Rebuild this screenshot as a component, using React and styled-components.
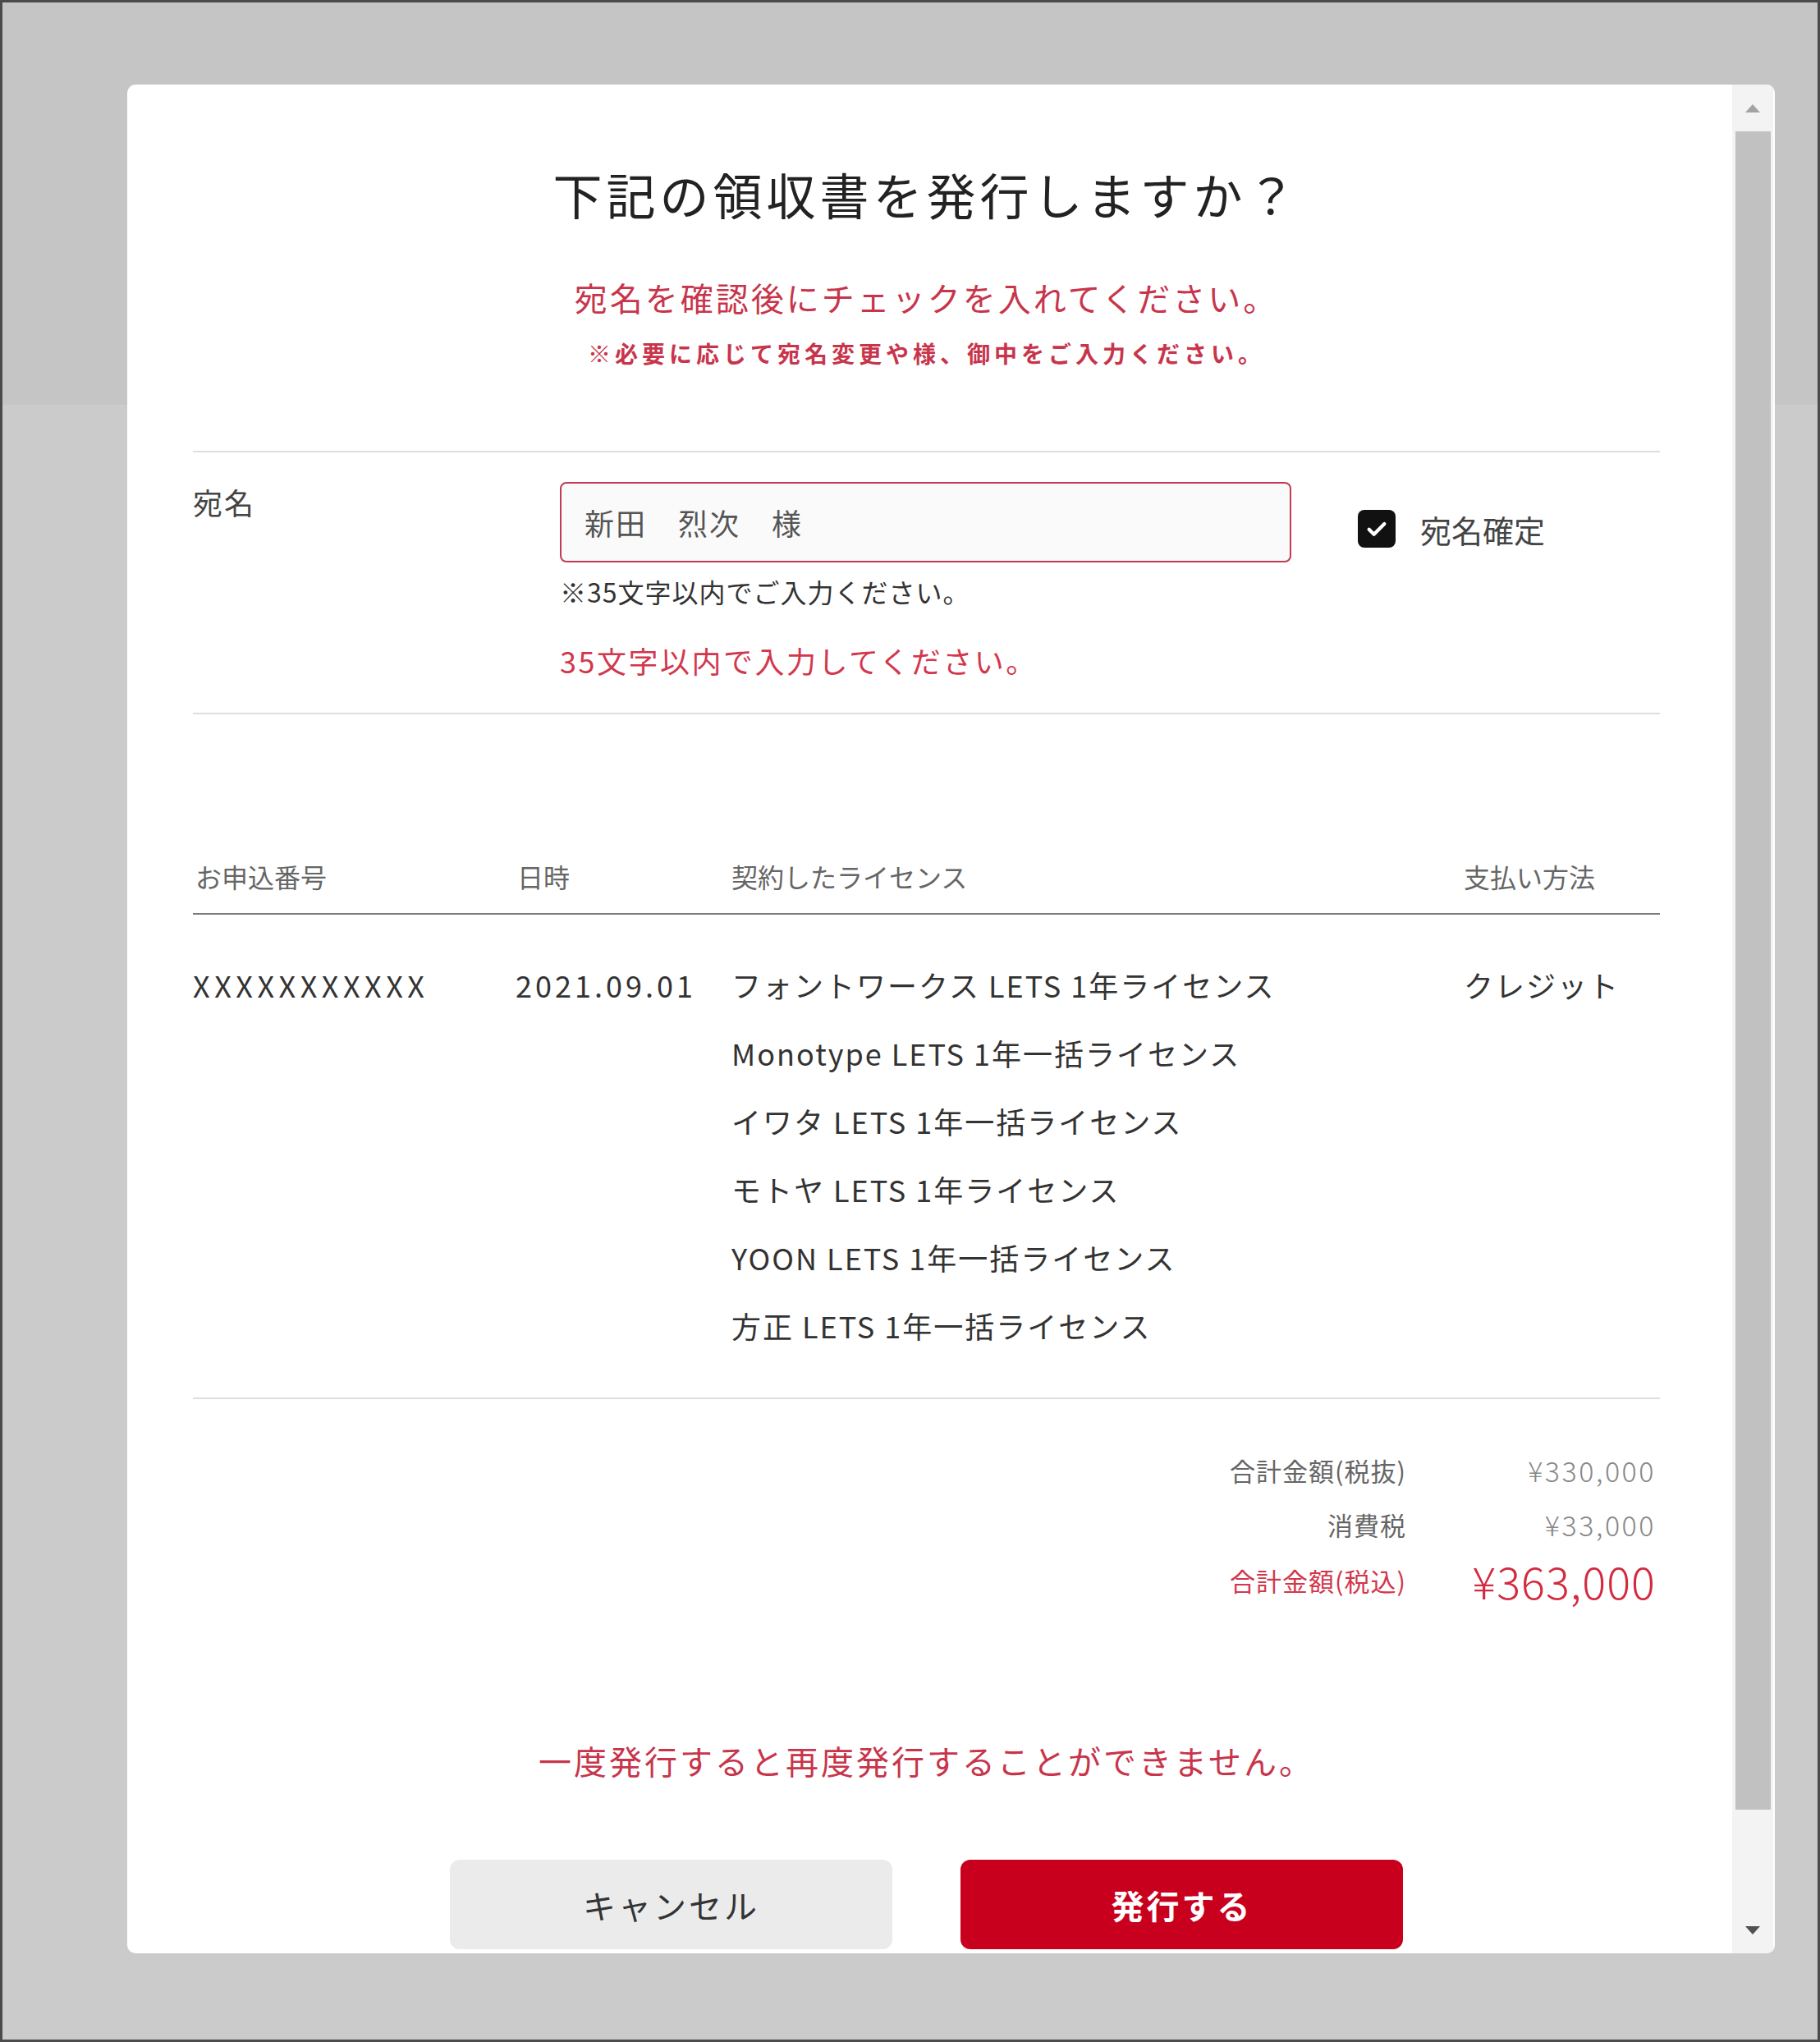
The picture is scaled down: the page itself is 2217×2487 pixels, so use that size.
import React from 'react';
import styled, { createGlobalStyle } from 'styled-components';

const GlobalStyle = createGlobalStyle`
  html, body {
    margin: 0;
    padding: 0;
  }
  body {
    font-family: "Noto Sans CJK JP", "Noto Sans", sans-serif;
    color: #333;
  }
`;

const Page = styled.div`
  box-sizing: border-box;
  width: 2217px;
  height: 2487px;
  border: 3px solid #4b4b4b;
  background: linear-gradient(to bottom, #c5c5c5 0, #c5c5c5 490px, #cbcbcb 490px);
  padding: 100px 52px 0 152px;
`;

const Modal = styled.div`
  height: 2276px;
  background: #fff;
  border-radius: 10px;
  display: flex;
  overflow: hidden;
`;

const Content = styled.div`
  flex: 1;
  overflow: hidden;
  padding: 0 88px 0 80px;
`;

const Title = styled.h1`
  margin: 98px 0 0;
  text-align: center;
  font-size: 60px;
  line-height: 70px;
  font-weight: 400;
  letter-spacing: 5px;
  color: #222;
`;

const Notice = styled.p`
  margin: ${(p) => p.$top}px 0 0;
  text-align: center;
  font-size: ${(p) => p.$size}px;
  line-height: ${(p) => p.$line}px;
  font-weight: ${(p) => (p.$bold ? 700 : 400)};
  letter-spacing: ${(p) => p.$spacing}px;
  color: #c8354b;
`;

const NameSection = styled.section`
  margin-top: 101px;
  border-top: 2px solid #dedede;
  border-bottom: 2px solid #dedede;
  padding: 36px 0 41px;
  display: grid;
  grid-template-columns: 447px 891px auto;
  align-items: start;
`;

const FieldLabel = styled.div`
  margin-top: 3px;
  font-size: 36px;
  line-height: 43px;
  letter-spacing: 2px;
  color: #444;
`;

const InputBox = styled.div`
  box-sizing: border-box;
  height: 98px;
  border: 2px solid #c23a53;
  border-radius: 8px;
  background: #fafafa;
  padding: 0 28px;
  display: flex;
  align-items: center;
  font-size: 36px;
  letter-spacing: 2px;
  color: #555;
`;

const Helper = styled.div`
  margin-top: ${(p) => p.$top}px;
  font-size: ${(p) => p.$size}px;
  line-height: ${(p) => p.$line}px;
  letter-spacing: ${(p) => p.$spacing}px;
  color: ${(p) => (p.$error ? '#d2374c' : '#333')};
`;

const Confirm = styled.label`
  margin: 34px 0 0 81px;
  height: 46px;
  display: flex;
  align-items: center;
  gap: 30px;
  font-size: 38px;
  color: #444;
`;

const CheckBox = styled.span`
  width: 46px;
  height: 46px;
  border-radius: 8px;
  background: #111;
  display: flex;
  align-items: center;
  justify-content: center;
`;

const Table = styled.div`
  margin-top: 178px;
`;

const Columns = styled.div`
  display: grid;
  grid-template-columns: 393px 263px 892px 1fr;
`;

const HeadRow = styled(Columns)`
  padding-bottom: 26px;
  border-bottom: 2px solid #7a7a7a;
  font-size: 32px;
  line-height: 38px;
  color: #666;
`;

const BodyRow = styled(Columns)`
  padding: 62px 0 65px;
  border-bottom: 2px solid #dedede;
  font-size: 36px;
  line-height: 46px;
  letter-spacing: 2px;
  color: #333;
`;

const Cell = styled.div`
  padding-left: ${(p) => p.$indent || 0}px;
  letter-spacing: ${(p) => (p.$spacing != null ? `${p.$spacing}px` : 'inherit')};
`;

const LicenseList = styled.div`
  display: flex;
  flex-direction: column;
  gap: 37px;
`;

const Totals = styled.div`
  margin-top: 53px;
  padding-right: 5px;
  display: grid;
  justify-content: end;
  grid-template-columns: auto 304px;
  grid-template-rows: 66px 66px 70px;
  align-items: center;
`;

const TotalLabel = styled.div`
  text-align: right;
  font-size: 31px;
  letter-spacing: 1px;
  color: ${(p) => (p.$accent ? '#d2374c' : '#666')};
`;

const TotalValue = styled.div`
  text-align: right;
  font-size: ${(p) => (p.$accent ? 54 : 34)}px;
  letter-spacing: ${(p) => (p.$accent ? 1 : 2.5)}px;
  font-weight: 300;
  color: ${(p) => (p.$accent ? '#d42a3f' : '#888')};
`;

const Actions = styled.div`
  margin-top: 97px;
  padding-bottom: 120px;
  display: flex;
  justify-content: center;
  gap: 83px;
`;

const Button = styled.button`
  width: 539px;
  height: 109px;
  border: none;
  border-radius: 12px;
  font-family: inherit;
  font-size: 40px;
  letter-spacing: 3px;
  font-weight: ${(p) => (p.$primary ? 700 : 400)};
  background: ${(p) => (p.$primary ? '#c8001e' : '#ebebeb')};
  color: ${(p) => (p.$primary ? '#fff' : '#333')};
`;

const ScrollBar = styled.div`
  width: 50px;
  margin-right: 2px;
  display: flex;
  flex-direction: column;
  background: #f3f3f3;
`;

const ScrollButton = styled.div`
  height: 57px;
  flex-shrink: 0;
  display: flex;
  align-items: center;
  justify-content: center;
`;

const Arrow = styled.span`
  width: 0;
  height: 0;
  border-left: 9px solid transparent;
  border-right: 9px solid transparent;
  ${(p) =>
    p.$down
      ? 'border-top: 10px solid #505050;'
      : 'border-bottom: 10px solid #a3a3a3;'}
`;

const Track = styled.div`
  flex: 1;
  display: flex;
  justify-content: center;
`;

const Thumb = styled.div`
  width: 43px;
  height: 2044px;
  flex-shrink: 0;
  background: #c1c1c1;
`;

const licenses = [
  'フォントワークス LETS 1年ライセンス',
  'Monotype LETS 1年一括ライセンス',
  'イワタ LETS 1年一括ライセンス',
  'モトヤ LETS 1年ライセンス',
  'YOON LETS 1年一括ライセンス',
  '方正 LETS 1年一括ライセンス',
];

const totals = [
  { label: '合計金額(税抜)', value: '¥330,000' },
  { label: '消費税', value: '¥33,000' },
  { label: '合計金額(税込)', value: '¥363,000', accent: true },
];

export default function App() {
  return (
    <>
      <GlobalStyle />
      <Page>
        <Modal>
          <Content>
            <Title>下記の領収書を発行しますか？</Title>
            <Notice $top={67} $size={40} $line={48} $spacing={3}>
              宛名を確認後にチェックを入れてください。
            </Notice>
            <Notice $top={26} $size={28} $line={36} $spacing={5} $bold>
              ※必要に応じて宛名変更や様、御中をご入力ください。
            </Notice>

            <NameSection>
              <FieldLabel>宛名</FieldLabel>
              <div>
                <InputBox>新田　烈次　様</InputBox>
                <Helper $top={16} $size={32} $line={38} $spacing={1}>
                  ※35文字以内でご入力ください。
                </Helper>
                <Helper $top={42} $size={36} $line={46} $spacing={2.5} $error>
                  35文字以内で入力してください。
                </Helper>
              </div>
              <Confirm>
                <CheckBox>
                  <svg width="32" height="32" viewBox="0 0 24 24" fill="none">
                    <path
                      d="M5 12.5l4.5 4.5L19 7.5"
                      stroke="#fff"
                      strokeWidth="3.2"
                      strokeLinecap="round"
                      strokeLinejoin="round"
                    />
                  </svg>
                </CheckBox>
                宛名確定
              </Confirm>
            </NameSection>

            <Table>
              <HeadRow>
                <Cell $indent={3}>お申込番号</Cell>
                <Cell $indent={2}>日時</Cell>
                <Cell>契約したライセンス</Cell>
                <Cell>支払い方法</Cell>
              </HeadRow>
              <BodyRow>
                <Cell $spacing={5.5}>XXXXXXXXXXX</Cell>
                <Cell $spacing={4}>2021.09.01</Cell>
                <LicenseList>
                  {licenses.map((l) => (
                    <div key={l}>{l}</div>
                  ))}
                </LicenseList>
                <Cell>クレジット</Cell>
              </BodyRow>
            </Table>

            <Totals>
              {totals.map((t) => (
                <React.Fragment key={t.label}>
                  <TotalLabel $accent={t.accent}>{t.label}</TotalLabel>
                  <TotalValue $accent={t.accent}>{t.value}</TotalValue>
                </React.Fragment>
              ))}
            </Totals>

            <Notice $top={161} $size={40} $line={48} $spacing={3}>
              一度発行すると再度発行することができません。
            </Notice>

            <Actions>
              <Button>キャンセル</Button>
              <Button $primary>発行する</Button>
            </Actions>
          </Content>

          <ScrollBar>
            <ScrollButton>
              <Arrow />
            </ScrollButton>
            <Track>
              <Thumb />
            </Track>
            <ScrollButton>
              <Arrow $down />
            </ScrollButton>
          </ScrollBar>
        </Modal>
      </Page>
    </>
  );
}
